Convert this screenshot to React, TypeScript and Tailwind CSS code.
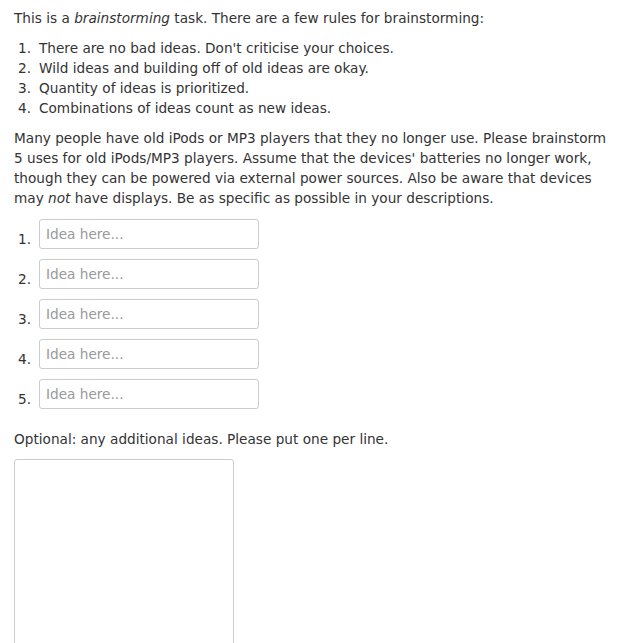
import React from "react";

const rules = [
  "There are no bad ideas. Don't criticise your choices.",
  "Wild ideas and building off of old ideas are okay.",
  "Quantity of ideas is prioritized.",
  "Combinations of ideas count as new ideas.",
];

export default function App() {
  return (
    <div
      className="min-h-[643px] bg-white px-[14px] pt-[8px] text-[13.65px] leading-[20px] text-[#333333]"
      style={{ fontFamily: '"DejaVu Sans", Verdana, sans-serif' }}
    >
      <p className="mb-[10px]">
        This is a <em>brainstorming</em> task. There are a few rules for brainstorming:
      </p>
      <ol className="mb-[10px]">
        {rules.map((r, i) => (
          <li key={i} className="flex">
            <span className="w-[25px] shrink-0 pl-[4px]">{i + 1}.</span>
            <span>{r}</span>
          </li>
        ))}
      </ol>
      <p className="mb-[11px]">
        Many people have old iPods or MP3 players that they no longer use. Please brainstorm 5 uses
        for old iPods/MP3 players. Assume that the devices' batteries no longer work, though they
        can be powered via external power sources. Also be aware that devices may <em>not</em> have
        displays. Be as specific as possible in your descriptions.
      </p>
      <div className="flex flex-col gap-[10px]">
        {[1, 2, 3, 4, 5].map((n) => (
          <div key={n} className="flex items-end">
            <span className="w-[25px] shrink-0 pl-[4px] leading-[20px]">{n}.</span>
            <input
              type="text"
              placeholder="Idea here..."
              className="h-[30px] w-[220px] rounded-[3px] border border-[#cccccc] px-[6px] text-[13.65px] text-[#555555] placeholder:text-[#999999] outline-none"
              style={{ fontFamily: '"DejaVu Sans", Verdana, sans-serif' }}
            />
          </div>
        ))}
      </div>
      <p className="mb-[10px] mt-[20px]">Optional: any additional ideas. Please put one per line.</p>
      <textarea
        className="block h-[200px] w-[220px] resize-none rounded-[3px] border border-[#cccccc] outline-none"
      />
    </div>
  );
}
